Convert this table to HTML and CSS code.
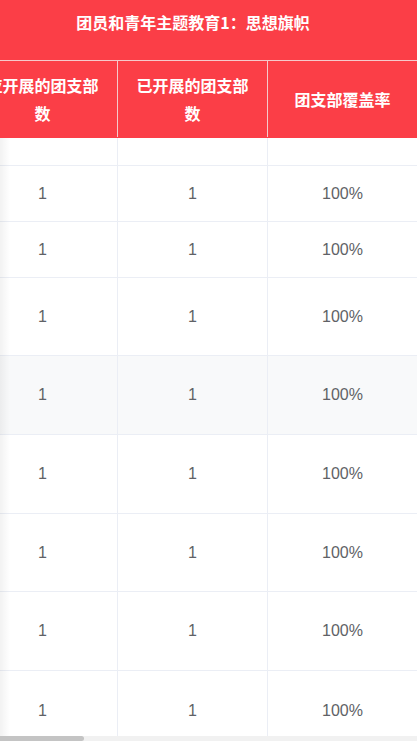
FILE: index.html
```html
<!DOCTYPE html>
<html lang="zh">
<head>
<meta charset="utf-8">
<link rel="stylesheet" href="styles.css">
</head>
<body>
<div class="page">
  <div class="viewport">
    <div class="table">
      <div class="title">团员和青年主题教育1：思想旗帜</div>
      <div class="row head">
        <div class="cell">应开展的团支部数</div>
        <div class="cell">已开展的团支部数</div>
        <div class="cell">团支部覆盖率</div>
      </div>
      <div class="row r-empty"><div class="cell"></div><div class="cell"></div><div class="cell"></div></div>
      <div class="row r-s"><div class="cell">1</div><div class="cell">1</div><div class="cell">100%</div></div>
      <div class="row r-s"><div class="cell">1</div><div class="cell">1</div><div class="cell">100%</div></div>
      <div class="row r-m"><div class="cell">1</div><div class="cell">1</div><div class="cell">100%</div></div>
      <div class="row r-l stripe"><div class="cell">1</div><div class="cell">1</div><div class="cell">100%</div></div>
      <div class="row r-l"><div class="cell">1</div><div class="cell">1</div><div class="cell">100%</div></div>
      <div class="row r-m"><div class="cell">1</div><div class="cell">1</div><div class="cell">100%</div></div>
      <div class="row r-l"><div class="cell">1</div><div class="cell">1</div><div class="cell">100%</div></div>
      <div class="row r-last"><div class="cell">1</div><div class="cell">1</div><div class="cell">100%</div></div>
    </div>
    <div class="fixed-shadow"></div>
  </div>
  <div class="scrollbar"><div class="thumb"></div></div>
</div>
</body>
</html>
```
FILE: styles.css
```css
html, body {
  margin: 0;
  padding: 0;
  background: #ffffff;
}
body {
  font-family: "Liberation Sans", "Noto Sans CJK SC", sans-serif;
  overflow: hidden;
}
.page {
  width: 417px;
  height: 741px;
  display: flex;
  flex-direction: column;
}
.viewport {
  flex: 1;
  overflow: hidden;
  position: relative;
}
.table {
  width: 450px;
  margin-left: -32px;
}
.title {
  height: 61px;
  box-sizing: border-box;
  padding-top: 9px;
  line-height: 26px;
  border-bottom: 1px solid #f5c9cb;
  background: #fb3e47;
  color: #ffffff;
  font-family: "Noto Sans CJK SC", sans-serif;
  font-weight: 700;
  font-size: 16px;
  text-align: center;
}
.row {
  display: grid;
  grid-template-columns: 150px 150px 150px;
  border-bottom: 1px solid #ebeef5;
}
.cell {
  display: flex;
  align-items: center;
  justify-content: center;
  text-align: center;
  border-right: 1px solid #ebeef5;
  box-sizing: border-box;
  padding: 0 12px;
  color: #606266;
  font-size: 16px;
}
.head {
  height: 77px;
  box-sizing: border-box;
  background: #fb3e47;
  border-bottom: 1px solid #fb3e47;
}
.head .cell {
  color: #ffffff;
  font-family: "Noto Sans CJK SC", sans-serif;
  font-weight: 700;
  line-height: 28px;
  border-right-color: #f5c9cb;
}
.r-empty { height: 28px; box-sizing: border-box; }
.r-s { height: 56px; box-sizing: border-box; }
.r-m { height: 78px; box-sizing: border-box; }
.r-l { height: 79px; box-sizing: border-box; }
.r-last { height: 80px; box-sizing: border-box; }
.stripe { background: #f8f9fa; }
.fixed-shadow {
  position: absolute;
  left: 0;
  top: 138px;
  bottom: 0;
  width: 10px;
  background: linear-gradient(to right, rgba(0,0,0,0.05), rgba(0,0,0,0));
  pointer-events: none;
}
.scrollbar {
  height: 5px;
  background: #f1f1f1;
  display: flex;
}
.thumb {
  width: 84px;
  height: 5px;
  background: #c4c4c4;
  border-radius: 0 3px 3px 0;
}
```
